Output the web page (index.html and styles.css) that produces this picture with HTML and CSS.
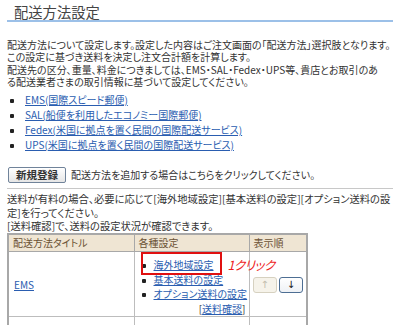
FILE: index.html
```html
<!doctype html>
<html lang="ja">
<head>
    <meta charset="UTF-8">
    <title>配送方法設定</title>
    <link rel="stylesheet" href="styles.css">
</head>
<body>
<div class="page">
    <h1 class="page-title">配送方法設定</h1>

    <p class="intro">配送方法について設定します。設定した内容はご注文画面の「配送方法」選択肢となります。<br>この設定に基づき送料を決定し注文合計額を計算します。<br>配送先の区分、重量、料金につきましては、EMS・SAL・Fedex・UPS等、貴店とお取引のあ<br>る配送業者さまの取引情報に基づいて設定してください。</p>

    <ul class="links">
        <li><a href="#">EMS(国際スピード郵便)</a></li>
        <li><a href="#">SAL(船便を利用したエコノミー国際郵便)</a></li>
        <li><a href="#">Fedex(米国に拠点を置く民間の国際配送サービス)</a></li>
        <li><a href="#">UPS(米国に拠点を置く民間の国際配送サービス)</a></li>
    </ul>

    <div class="add-row">
        <button class="btn-new">新規登録</button>
        <span>配送方法を追加する場合はこちらをクリックしてください。</span>
    </div>

    <p class="note">送料が有料の場合、必要に応じて[海外地域設定][基本送料の設定][オプション送料の設<br>定]を行ってください。<br>[送料確認]で、送料の設定状況が確認できます。</p>

    <table class="ship-table">
        <tr>
            <th class="col-title">配送方法タイトル</th>
            <th class="col-set">各種設定</th>
            <th class="col-order">表示順</th>
        </tr>
        <tr>
            <td class="cell-title"><a href="#">EMS</a></td>
            <td class="cell-set">
                <div class="set-wrap">
                    <ul class="set-list">
                        <li><a href="#">海外地域設定</a></li>
                        <li><a href="#">基本送料の設定</a></li>
                        <li><a href="#">オプション送料の設定</a></li>
                    </ul>
                    <div class="confirm">[<a href="#">送料確認</a>]</div>
                    <span class="mark-box"></span>
                    <span class="mark-label">1クリック</span>
                </div>
            </td>
            <td class="cell-order">
                <button class="btn-move" disabled>↑</button>
                <button class="btn-move">↓</button>
            </td>
        </tr>
        <tr>
            <td class="cell-title"><a href="#">SAL</a></td>
            <td class="cell-set">
                <ul class="set-list">
                    <li><a href="#">海外地域設定</a></li>
                    <li><a href="#">基本送料の設定</a></li>
                </ul>
            </td>
            <td class="cell-order"></td>
        </tr>
    </table>
</div>
</body>
</html>
```

FILE: styles.css
```css
*
{
    box-sizing: border-box;
}

body
{
    margin: 0;
    color: #333;
    font-family: "Noto Sans CJK JP", "Noto Sans", sans-serif;
    font-size: 10px;
    font-feature-settings: "palt";
    background-color: #fff;
    overflow: hidden;
}

a
{
    color: #2a5db0;
    text-decoration: underline;
}

.page
{
    padding: 0 7px;
}

.page-title
{
    margin: 0;
    padding: 3px 0 0 7px;
    font-size: 14.3px;
    font-weight: normal;
    line-height: 17px;
    color: #444;
    border-bottom: 2px solid #9cc0e8;
}

.intro
{
    margin: 17px 0 0;
    line-height: 12.3px;
    white-space: nowrap;
}

.links
{
    list-style: none;
    margin: 4px 0 0;
    padding: 0;
}

.links li
{
    line-height: 15px;
}

.links li::before,
.set-list li::before
{
    content: "";
    display: inline-block;
    width: 4px;
    height: 4px;
    border-radius: 1px;
    background-color: #222;
    vertical-align: middle;
}

.links li::before
{
    margin: 0 11px 0 3px;
}

.add-row
{
    display: flex;
    align-items: center;
    gap: 5px;
    margin-top: 14px;
    height: 17px;
}

.btn-new
{
    height: 16px;
    margin-left: 1px;
    padding: 0 7px;
    font-family: inherit;
    font-size: 10.5px;
    font-weight: bold;
    line-height: 14px;
    color: #333;
    background: linear-gradient(#fff, #e6e6e6);
    border: 1px solid #70839a;
    border-radius: 2px;
}

.note
{
    margin: 5px 0 0;
    padding-top: 3px;
    border-top: 1px solid #c8c8c8;
    font-size: 10.3px;
    line-height: 13.5px;
    white-space: nowrap;
}

.ship-table
{
    width: 301px;
    table-layout: fixed;
    border-collapse: collapse;
    border: 2px solid #a8a8a8;
}

.ship-table th
{
    height: 18px;
    padding: 0 4px;
    text-align: left;
    font-weight: normal;
    color: #6b5233;
    background-color: #efe5d3;
    border: 1px solid #a8a8a8;
}

.ship-table td
{
    border: 1px solid #bdbdbd;
    vertical-align: middle;
}

.col-title
{
    width: 126px;
}

.col-set
{
    width: 115px;
}

.cell-title
{
    padding: 0 5px;
}

.cell-set
{
    padding: 0;
    white-space: nowrap;
}

.set-wrap
{
    position: relative;
    padding: 6px 3px 0 4px;
}

.cell-set > .set-list
{
    padding: 6px 3px 0 4px;
}

.set-list
{
    list-style: none;
    margin: 0;
    padding: 0;
}

.set-list li
{
    line-height: 14.5px;
}

.set-list li::before
{
    margin: 0 8px 0 3px;
}

.confirm
{
    text-align: right;
    line-height: 14.5px;
}

.mark-box
{
    position: absolute;
    left: 6px;
    top: 0;
    width: 81px;
    height: 23px;
    border: 2px solid #e01010;
}

.mark-label
{
    position: absolute;
    left: 93px;
    top: 4px;
    font-size: 12.5px;
    line-height: 18px;
    letter-spacing: -0.5px;
    color: #ee1c1c;
    font-style: italic;
}

.cell-order
{
    text-align: center;
    padding: 0;
}

.btn-move
{
    width: 24px;
    height: 16px;
    padding: 0;
    font-family: "DejaVu Sans", sans-serif;
    font-size: 10px;
    line-height: 12px;
    color: #111;
    background: linear-gradient(#fff, #eef1f5);
    border: 1px solid #4d6e93;
    border-radius: 3px;
}

.btn-move:disabled
{
    color: #c4bfae;
    background: #f6f3ea;
    border-color: #d6d1c0;
}
```
